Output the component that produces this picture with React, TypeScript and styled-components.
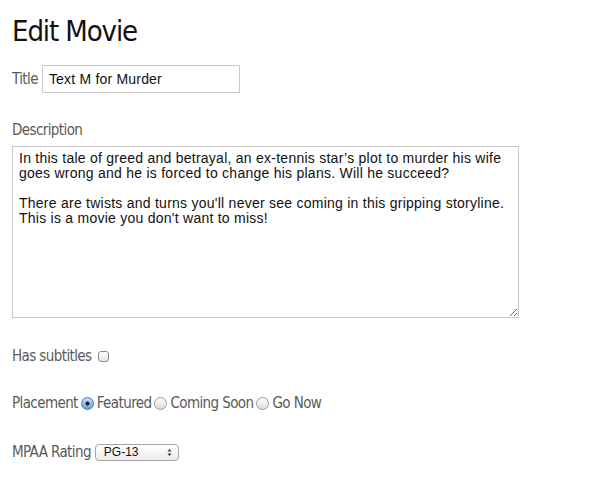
import React from 'react'
import styled, { createGlobalStyle } from 'styled-components'

const GlobalStyle = createGlobalStyle`
  html, body {
    margin: 0;
    padding: 0;
    background: #ffffff;
  }
  body {
    font-family: "DejaVu Sans Condensed", "Liberation Sans", sans-serif;
    color: #555555;
  }
`

const Page = styled.form`
  padding: 13px 12px 0 12px;
  width: 576px;
`

const Heading = styled.h1`
  margin: 0;
  font-size: 29px;
  line-height: 36px;
  font-weight: 400;
  letter-spacing: -1.1px;
  color: #111111;
`

const Field = styled.div<{ $top: number; $gap?: number }>`
  display: flex;
  align-items: center;
  gap: ${(p) => p.$gap ?? 4}px;
  margin-top: ${(p) => p.$top}px;
`

const Stack = styled.div<{ $top: number }>`
  display: flex;
  flex-direction: column;
  align-items: flex-start;
  gap: 7px;
  margin-top: ${(p) => p.$top}px;
`

const Label = styled.label`
  font-size: 15px;
  line-height: 18px;
  letter-spacing: -0.6px;
  color: #5a5a5a;
`

const TextInput = styled.input`
  box-sizing: border-box;
  width: 198px;
  height: 28px;
  border: 1px solid #c9c9c9;
  padding: 0 6px;
  font-family: "Liberation Sans", Arial, sans-serif;
  font-size: 14px;
  letter-spacing: 0.2px;
  color: #111111;
  outline: none;
`

const TextArea = styled.textarea`
  box-sizing: border-box;
  width: 507px;
  height: 172px;
  border: 1px solid #c9c9c9;
  padding: 4px 6px;
  font-family: "Liberation Sans", Arial, sans-serif;
  font-size: 14px;
  line-height: 15px;
  letter-spacing: 0.25px;
  color: #111111;
  resize: both;
  outline: none;
`

const Check = styled.input`
  appearance: none;
  margin: 0 0 0 1px;
  width: 11px;
  height: 11px;
  border: 1px solid #8d8d8d;
  border-radius: 3px;
  background: linear-gradient(#ffffff, #e4e4e4);
  box-sizing: border-box;
`

const Options = styled.div`
  display: flex;
  align-items: center;
  gap: 3px;
`

const Radio = styled.input`
  appearance: none;
  margin: 0;
  width: 13px;
  height: 13px;
  border-radius: 50%;
  box-sizing: border-box;
  border: 1px solid #9a9a9a;
  background: linear-gradient(#ffffff, #dcdcdc);

  &:checked {
    border-color: #4a79b3;
    background: radial-gradient(circle, #1c1c1c 0 1.8px, transparent 2.3px),
      linear-gradient(#c5dcf5, #6aa0dc);
  }
`

const OptionText = styled.span`
  font-size: 15px;
  line-height: 18px;
  letter-spacing: -0.6px;
  color: #5a5a5a;
`

const SelectBox = styled.div`
  position: relative;
  display: inline-flex;
`

const Select = styled.select`
  appearance: none;
  box-sizing: border-box;
  width: 84px;
  height: 17px;
  padding: 0 0 0 8px;
  border: 1px solid #a6a6a6;
  border-radius: 4px;
  background: linear-gradient(#ffffff, #ececec);
  font-family: "Liberation Sans", Arial, sans-serif;
  font-size: 12px;
  color: #111111;
  outline: none;
`

const Arrows = styled.svg`
  position: absolute;
  right: 7px;
  top: 4px;
  pointer-events: none;
`

export default function App() {
  return (
    <>
      <GlobalStyle />
      <Page onSubmit={(e) => e.preventDefault()}>
        <Heading>Edit Movie</Heading>

        <Field $top={16}>
          <Label htmlFor="title">Title</Label>
          <TextInput id="title" defaultValue="Text M for Murder" />
        </Field>

        <Stack $top={28}>
          <Label htmlFor="description">Description</Label>
          <TextArea
            id="description"
            defaultValue={
              "In this tale of greed and betrayal, an ex-tennis star\u2019s plot to murder his wife goes wrong and he is forced to change his plans. Will he succeed?\n\nThere are twists and turns you'll never see coming in this gripping storyline. This is a movie you don't want to miss!"
            }
          />
        </Stack>

        <Field $top={29} $gap={5}>
          <Label htmlFor="subtitles">Has subtitles</Label>
          <Check type="checkbox" id="subtitles" />
        </Field>

        <Field $top={29} $gap={3}>
          <Label>Placement</Label>
          <Options>
            <Radio type="radio" name="placement" defaultChecked />
            <OptionText>Featured</OptionText>
          </Options>
          <Options>
            <Radio type="radio" name="placement" />
            <OptionText>Coming Soon</OptionText>
          </Options>
          <Options>
            <Radio type="radio" name="placement" />
            <OptionText>Go Now</OptionText>
          </Options>
        </Field>

        <Field $top={31}>
          <Label htmlFor="rating">MPAA Rating</Label>
          <SelectBox>
            <Select id="rating" defaultValue="PG-13">
              <option>G</option>
              <option>PG</option>
              <option>PG-13</option>
              <option>R</option>
            </Select>
            <Arrows width="5" height="9" viewBox="0 0 5 9">
              <path d="M0.5 3.5 L2.5 1 L4.5 3.5 Z M0.5 5.5 L2.5 8 L4.5 5.5 Z" fill="#333" />
            </Arrows>
          </SelectBox>
        </Field>
      </Page>
    </>
  )
}
